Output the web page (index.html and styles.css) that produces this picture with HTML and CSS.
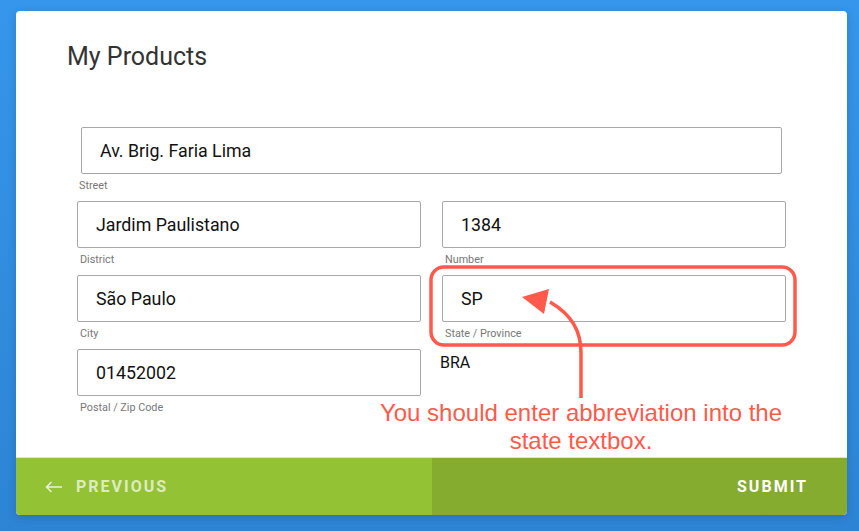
FILE: index.html
```html
<!DOCTYPE html>
<html lang="en">
  <head>
    <meta charset="UTF-8" />
    <meta name="viewport" content="width=device-width, initial-scale=1.0" />
    <title>My Products</title>
    <link rel="stylesheet" href="styles.css">
  </head>
  <body>
    <div class="card">
      <div class="content">
        <h1>My Products</h1>

        <form class="address">
          <div class="field wide">
            <input type="text" value="Av. Brig. Faria Lima" />
            <label>Street</label>
          </div>
          <div class="field">
            <input type="text" value="Jardim Paulistano" />
            <label>District</label>
          </div>
          <div class="field">
            <input type="text" value="1384" />
            <label>Number</label>
          </div>
          <div class="field">
            <input type="text" value="São Paulo" />
            <label>City</label>
          </div>
          <div class="field">
            <input type="text" value="SP" />
            <label>State / Province</label>
          </div>
          <div class="field">
            <input type="text" value="01452002" />
            <label>Postal / Zip Code</label>
          </div>
          <div class="country">BRA</div>
        </form>
      </div>

      <div class="footer">
        <button type="button" class="prev">
          <svg class="arrow" width="18" height="12" viewBox="0 0 18 12">
            <path d="M17 6 H1.5 M6.5 1 L1.5 6 L6.5 11" />
          </svg>
          Previous
        </button>
        <button type="button" class="submit">Submit</button>
      </div>

      <!-- annotation drawn over the form -->
      <svg class="callout" width="831" height="504" viewBox="0 0 831 504">
        <rect x="415" y="256" width="364" height="78" rx="13" ry="13" />
        <path d="M565 387 L565 342 C565 320 556 304 534 291" />
        <polygon class="head" points="506,286 533,278 528,303" />
      </svg>
      <p class="note">You should enter abbreviation into the<br />state textbox.</p>
    </div>
  </body>
</html>
```

FILE: styles.css
```css
html,
body {
  height: 100%;
}
body {
  margin: 0;
  padding: 11px 12px 16px 16px;
  box-sizing: border-box;
  background: linear-gradient(180deg, #3596eb 0%, #2d84d4 100%);
  font-family: Roboto, "Noto Sans", sans-serif;
}
.card {
  position: relative;
  width: 831px;
  height: 504px;
  background-color: #fff;
  border-radius: 4px;
  overflow: hidden;
  display: flex;
  flex-direction: column;
  box-shadow: 0 2px 8px rgba(0, 0, 0, 0.15);
}
.content {
  flex: 1;
  padding: 32px 0 0 51px;
}
h1 {
  margin: 0;
  font-size: 25px;
  font-weight: 400;
  line-height: 28px;
  color: #333;
}
.address {
  display: grid;
  grid-template-columns: 344px 344px;
  column-gap: 21px;
  margin: 56px 0 0 10px;
}
.field {
  display: flex;
  flex-direction: column;
  margin-bottom: 6px;
}
.field.wide {
  grid-column: 1 / span 2;
  margin: 0 4px 6px 4px;
}
.field.wide label {
  margin-left: -2px;
}
.field input {
  box-sizing: border-box;
  height: 47px;
  padding: 0 18px;
  border: 1px solid #a8a8a8;
  border-radius: 2px;
  font-family: Roboto, "Noto Sans", sans-serif;
  font-size: 17.8px;
  color: #111;
  outline: none;
}
.field label {
  margin-top: 5px;
  margin-left: 3px;
  font-size: 10.8px;
  line-height: 14px;
  color: #777;
  height: 16px;
}
.country {
  padding-top: 4px;
  margin-left: -2px;
  font-size: 16px;
  color: #111;
}
.footer {
  display: flex;
  height: 57px;
  border-top: 1px solid #dde3d0;
}
.footer button {
  width: 50%;
  box-sizing: border-box;
  display: flex;
  align-items: center;
  border: none;
  font-family: Roboto, "Noto Sans", sans-serif;
  font-size: 16px;
  font-weight: 700;
  letter-spacing: 2px;
  text-transform: uppercase;
  cursor: pointer;
}
.prev {
  background-color: #93c234;
  color: rgba(255, 255, 255, 0.7);
  justify-content: flex-start;
  padding: 0 0 0 29px;
}
.prev .arrow {
  margin-right: 13px;
  fill: none;
  stroke: rgba(255, 255, 255, 0.8);
  stroke-width: 1.5;
}
.submit {
  background-color: #86ac2f;
  color: #fff;
  justify-content: flex-end;
  padding: 0 39px 0 0;
}
.callout {
  position: absolute;
  left: 0;
  top: 0;
  pointer-events: none;
}
.callout rect,
.callout path {
  fill: none;
  stroke: #ff5a4b;
  stroke-width: 3.5;
}
.callout .head {
  fill: #ff5a4b;
}
.note {
  position: absolute;
  left: 315px;
  top: 388px;
  width: 500px;
  margin: 0;
  text-align: center;
  font-family: "Liberation Sans", Arial, sans-serif;
  font-size: 24px;
  line-height: 28px;
  color: #ff5a4b;
}
```
